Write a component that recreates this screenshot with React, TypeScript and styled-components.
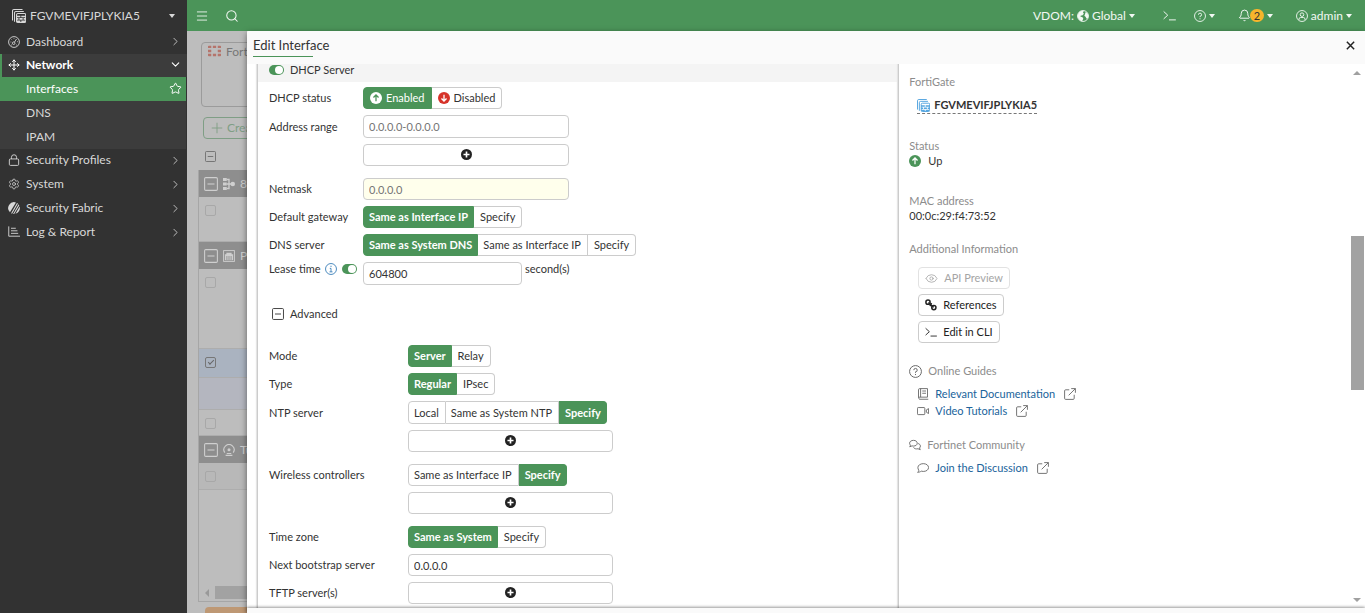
import React from "react";
import styled, { createGlobalStyle, css } from "styled-components";
import { Bell, ChevronDown, ChevronRight, Eye, Menu, Move, Search, Settings, Star } from "lucide-react";

const green = "#4b9459";
const line = "#cccccc";

const GlobalStyle = createGlobalStyle`
  html, body, #root { height: 100%; margin: 0; }
  *, *::before, *::after { box-sizing: border-box; }
  body, button, input { font: 400 12px/16px Lato, sans-serif; color: #333; }
  button { margin: 0; padding: 0; border: 0; background: none; cursor: pointer; white-space: nowrap; }
  svg { flex: none; display: block; }
`;

/* ---------- icons ---------- */

const Glyph = styled.svg.attrs({ viewBox: "0 0 16 16", "aria-hidden": true })<{ $size?: number }>`
  width: ${(p) => p.$size ?? 12}px;
  height: ${(p) => p.$size ?? 12}px;
  fill: none;
  stroke: currentColor;
  stroke-width: 1.2;
`;

const StackIcon = ({ size = 14 }: { size?: number }) => (
  <Glyph $size={size}>
    <path d="M12 .6H2.200A1.600 1.600 0 0 0 .6 2.200V13M13.500 2.900H4.500a1.600 1.600 0 0 0-1.600 1.600V14.500" />
    <path d="M5.200 14V6.600A1.400 1.400 0 0 1 6.600 5.200h7.800a1.200 1.200 0 0 1 1.200 1.200V14a1.400 1.400 0 0 1-1.400 1.400H6.600A1.400 1.400 0 0 1 5.200 14Z" />
    <path fill="currentColor" stroke="none" d="M5 7.600h4.600v1.800H5ZM10.600 7.600H16v1.800h-5.400ZM5 10.400h2.400v1.800H5ZM8.400 10.400h3.800v1.800H8.400ZM13.200 10.400H16v1.800h-2.800ZM5 13.200h4.600V15H5ZM10.600 13.200H15V15h-4.400Z" />
  </Glyph>
);
const GaugeIcon = () => (
  <Glyph>
    <circle cx="8" cy="8" r="7.2" />
    <circle cx="7.6" cy="9.6" r="1.7" />
    <path d="M8.6 8.2 11.4 4M3.4 8h1M4.8 4.8l.6.6M8 3.2v.8M12 7.6h1M4.2 12h1M11 12h1" />
  </Glyph>
);
const LockIcon = () => (
  <Glyph>
    <rect x="1.800" y="6.600" width="12.400" height="8.600" rx="1.400" />
    <path d="M4.600 6.600V4.400a3.400 3.400 0 0 1 6.800 0v2.200" />
  </Glyph>
);
const FabricIcon = () => (
  <Glyph>
    <path fill="currentColor" stroke="none" d="M10.6.5A8 8 0 0 0 2.6 13.8ZM12 1.2 4.2 15l1.2.5L13.3 2.1ZM14.2 3 6.8 15.9l1.4.1L15 4.5ZM15.6 6 10 15.7A8 8 0 0 0 15.6 6Z" />
  </Glyph>
);
const ReportIcon = () => (
  <Glyph>
    <path d="M1 .5V13.6h15M4 3h6.4M4 6.4h8.6M4 9.8h9.6" />
  </Glyph>
);
const GlobeIcon = () => (
  <Glyph>
    <circle cx="8" cy="8" r="7.3" />
    <path fill="currentColor" stroke="none" d="M2 4.2C3.6 1.8 6.4.8 9 1.2L8 3.4 9.2 5 7 7.2H5.2L4.4 8.800l3 .8 1 2-1.600 3.400C3.400 14.400.6 11 1 7ZM11.200 3l2.400.8 1.600 3.400-.6 3.400-1.800 1-1.400-2.600-1.600-1.400 1-2.200Z" />
  </Glyph>
);
const TerminalIcon = ({ size = 13 }: { size?: number }) => (
  <Glyph $size={size}>
    <path d="m.8 3 5 4.6-5 4.6M7.4 13.4h8.4" />
  </Glyph>
);
const HelpIcon = ({ size = 12 }: { size?: number }) => (
  <Glyph $size={size}>
    <circle cx="8" cy="8" r="7.3" />
    <path d="M5.900 6.300A2.100 2.100 0 1 1 8 8.400v1.200M8 11v1.400" />
  </Glyph>
);
const UserIcon = () => (
  <Glyph>
    <circle cx="8" cy="8" r="7.3" />
    <circle cx="8" cy="6.2" r="2.4" />
    <path d="M4 13.2V12a2.2 2.2 0 0 1 2.2-2h3.6a2.2 2.2 0 0 1 2.2 2v1.2" />
  </Glyph>
);
const ArrowDisc = ({ disc, arrow, down }: { disc: string; arrow: string; down?: boolean }) => (
  <Glyph>
    <circle cx="8" cy="8" r="8" fill={disc} stroke="none" />
    <path stroke={arrow} strokeWidth="1.7" d={down ? "M8 3.8v8M4.6 8.6 8 12l3.4-3.4" : "M8 12.2v-8M4.6 7.4 8 4l3.4 3.4"} />
  </Glyph>
);
const PlusDisc = () => (
  <Glyph $size={11}>
    <circle cx="8" cy="8" r="8" fill="#222" stroke="none" />
    <path stroke="#fff" strokeWidth="2.4" d="M8 3.6v8.8M3.6 8h8.8" />
  </Glyph>
);
const InfoIcon = () => (
  <Glyph>
    <circle cx="8" cy="8" r="7.3" />
    <path d="M8 3.600v1.800M6.400 7.200H8v4.600M6 11.800h4" />
  </Glyph>
);
const MinusBox = ({ size = 12 }: { size?: number }) => (
  <Glyph $size={size}>
    <rect x=".7" y=".7" width="14.6" height="14.6" rx="1.4" />
    <path d="M4 8h8" />
  </Glyph>
);
const ChainIcon = () => (
  <Glyph>
    <g strokeWidth="2">
      <circle cx="4" cy="4.200" r="2.800" />
      <circle cx="11.800" cy="11.400" r="2.800" />
      <path d="m4.600 4.600 6.800 6.600M8.800 5.600 6.600 9.400" />
    </g>
  </Glyph>
);
const BookIcon = () => (
  <Glyph>
    <path d="M2 13.2V2.4A1.6 1.6 0 0 1 3.6.8H14v11.4H3.4A1.5 1.5 0 0 0 3.4 15H15M4.8.8v11.4M7 4h5M7 7h5" />
  </Glyph>
);
const VideoIcon = () => (
  <Glyph>
    <rect x=".6" y="3.4" width="9.8" height="9.4" rx="1" />
    <path d="m12.4 6.6 3-1.8v6.6l-3-1.8Z" />
  </Glyph>
);
const ChatsIcon = () => (
  <Glyph>
    <path d="M6 1.8c3 0 5 1.6 5 3.8S9 9.4 6 9.4c-.8 0-1.4 0-2-.2L1 10.4l1-2.2C1.200 7.400.8 6.600.8 5.600.8 3.400 3 1.800 6 1.800ZM12.200 6c1.800.600 3 1.800 3 3.400 0 1-.400 1.800-1.200 2.600l1 2.200-3-1.200c-2.400.600-5 0-6-1.800" />
  </Glyph>
);
const SpeechIcon = () => (
  <Glyph>
    <path d="M8.4 2.2c4 0 7 2.200 7 5.200s-3 5.200-7 5.200c-1 0-2-.2-2.800-.4-1 .8-2.400 1.400-4.800 1.600 1-.8 1.600-1.800 1.600-2.800-.8-1-1.200-2.200-1.200-3.600 0-3 3.200-5.200 7.200-5.200Z" />
  </Glyph>
);
const ExternalIcon = () => (
  <Glyph>
    <path d="M7 2.400H2.200A1.400 1.400 0 0 0 .8 3.800v10a1.400 1.400 0 0 0 1.400 1.400h10a1.400 1.400 0 0 0 1.400-1.400V9M9.600.8h5.600v5.600M15.200.8 6.200 9.800" />
  </Glyph>
);
const CloseIcon = () => (
  <Glyph $size={9}>
    <path d="m1.500 1.500 13 13M14.500 1.500l-13 13" strokeWidth="2.600" />
  </Glyph>
);
const ChassisIcon = () => (
  <Glyph $size={13}>
    <path fill="#b5746b" stroke="none" d="M1 2h3v3H0V3a1 1 0 0 1 1-1ZM6 2h4v3H6ZM12 2h3a1 1 0 0 1 1 1v2h-4ZM0 7h4v3H0ZM12 7h4v3h-4ZM0 12h4v3H1a1 1 0 0 1-1-1ZM6 12h4v3H6ZM12 12h4v2a1 1 0 0 1-1 1h-3Z" />
  </Glyph>
);
const AggregateIcon = () => (
  <Glyph>
    <path fill="currentColor" stroke="none" d="M0 0h5v4H0ZM0 6h5v4H0ZM0 12h5v4H0Z" />
    <circle cx="13" cy="8" r="3" fill="currentColor" stroke="none" />
    <path d="M5 2h3v12H5M5 8h6" strokeWidth="1.800" />
  </Glyph>
);
const PortIcon = () => (
  <Glyph>
    <rect x=".8" y=".8" width="14.400" height="14.400" />
    <path fill="currentColor" stroke="none" d="M2.500 13.500v-8h2v-2h7v2h2v8Z" />
    <path stroke="#8e8e8e" d="M5.200 8v5.500M8 8v5.500M10.800 8v5.500" />
  </Glyph>
);
const TunnelIcon = () => (
  <Glyph>
    <path strokeWidth="1.500" d="M2.400 11.500A6.800 6.800 0 1 1 13.600 11.500M3.500 15.200h9M5 12.600h6" />
    <circle cx="8" cy="7.800" r="2" fill="currentColor" stroke="none" />
  </Glyph>
);

const Caret = styled.i`
  border: 3px solid transparent;
  border-top: 4px solid currentColor;
  border-bottom: 0;
`;

/* ---------- shell ---------- */

const Shell = styled.div`
  display: grid;
  grid-template-columns: 187px minmax(0, 1fr);
  height: 100%;
  overflow: hidden;
  background: #fff;
`;

const Sidebar = styled.nav`
  background: #323232;
  color: #d8d8d8;
`;

const DeviceButton = styled.button`
  display: flex;
  align-items: center;
  gap: 4px;
  width: 100%;
  height: 31px;
  padding: 0 12px;
  color: #d8d8d8;
  span { flex: 1; text-align: left; }
`;

const NavLink = styled.a<{ $open?: boolean; $roomy?: boolean }>`
  display: flex;
  align-items: center;
  gap: 6px;
  height: ${(p) => (p.$roomy ? 24 : 23)}px;
  padding: 0 5px 2px ${(p) => (p.$open ? 6 : 8)}px;
  color: inherit;
  text-decoration: none;
  > span { flex: 1; }
  ${(p) => p.$open && css`
    border-left: 2px solid ${green};
    background: #3c3c3c;
    color: #fff;
    font-weight: 700;
  `}
`;

const SubLink = styled.a<{ $active?: boolean }>`
  display: flex;
  align-items: center;
  justify-content: space-between;
  height: 24px;
  margin-right: 1px;
  padding: 0 4px 1px 26px;
  background: ${(p) => (p.$active ? green : "#3c3c3c")};
  color: ${(p) => (p.$active ? "#fff" : "inherit")};
  text-decoration: none;
`;

const Main = styled.div`
  display: grid;
  grid-template: 31px minmax(0, 1fr) / 60px minmax(0, 1fr);
  min-width: 0;
  min-height: 0;
`;

const TopBar = styled.header`
  display: flex;
  align-items: center;
  grid-column: 1 / -1;
  gap: 16px;
  padding: 0 13px 0 8px;
  background: ${green};
  color: #fff;
`;

const TopButton = styled.button`
  display: flex;
  align-items: center;
  gap: 3px;
  color: #f2f8f3;
`;

const TopMenus = styled.div`
  display: flex;
  align-items: center;
  gap: 23px;
  margin-left: auto;
`;

const Pair = styled.div`
  display: flex;
  gap: 18px;
  padding-left: 5px;
`;

const Badge = styled.span`
  width: 14px;
  height: 13px;
  margin-left: -4px;
  border-radius: 7px;
  background: #f7b52c;
  color: #333;
  font-size: 11px;
  line-height: 13px;
`;

/* ---------- dimmed page beside the drawer ---------- */

const Backdrop = styled.main`
  overflow: hidden;
  background: #bdbdbd;
  color: #777;
`;

const BackPage = styled.div`
  display: flex;
  flex-direction: column;
  width: 400px;
  height: 100%;
  padding: 11px 12px 0 11px;
`;

const DimCard = styled.section`
  display: flex;
  gap: 5px;
  flex: none;
  height: 65px;
  margin-left: 3px;
  padding: 1px 6px;
  border: 1px solid #9b9b9b;
  border-radius: 4px;
`;

const CreateButton = styled.button`
  display: flex;
  align-items: center;
  align-self: flex-start;
  flex: none;
  gap: 4px;
  height: 22px;
  margin: 10px 0 0 5px;
  padding: 0 7px;
  border: 1px solid #7f9e85;
  border-radius: 4px;
  color: #7f9e85;
`;

const HeadCell = styled.div`
  display: flex;
  align-items: center;
  flex: none;
  height: 31px;
  padding: 4px 0 0 7px;
  color: #666;
`;

const DimTable = styled.div`
  display: flex;
  flex-direction: column;
  flex: 1;
  min-height: 0;
  margin-bottom: 5px;
  border: 1px solid #a6a6a6;
  border-top: 0;
`;

const GroupRow = styled.div`
  display: flex;
  align-items: center;
  gap: 5px;
  flex: none;
  height: 27px;
  padding-left: 5px;
  background: #8e8e8e;
  color: #cfcfcf;
  white-space: nowrap;
`;

const DimRow = styled.div<{ $h: number; $bg?: string }>`
  flex: none;
  height: ${(p) => p.$h}px;
  padding: 8px 6px;
  border-bottom: 1px solid #adadad;
  background: ${(p) => p.$bg ?? "transparent"};
`;

const DimCheck = styled.input.attrs({ type: "checkbox", "aria-label": "Select row" })`
  appearance: none;
  display: block;
  width: 11px;
  height: 11px;
  margin: 0;
  border: 1px solid #a8a8a8;
  border-radius: 2px;
  &:checked { border-color: #777; }
  &:checked::before {
    content: "";
    display: block;
    width: 6px;
    height: 3px;
    margin: 2px 0 0 2px;
    border: solid #666;
    border-width: 0 0 1px 1px;
    transform: rotate(-45deg);
  }
`;

const DimScroll = styled.div`
  display: flex;
  align-items: center;
  gap: 6px;
  height: 13px;
  margin: auto 0 2px;
  padding-left: 6px;
  &::before {
    content: "";
    border: 4px solid transparent;
    border-right-color: #999;
    border-left: 0;
  }
  &::after { content: ""; width: 60%; height: 13px; background: #a2a2a2; }
`;

const OrangeButton = styled.div`
  flex: none;
  width: 80px;
  height: 6px;
  margin-left: 7px;
  border-radius: 4px 4px 0 0;
  background: #be9874;
`;

/* ---------- drawer ---------- */

const Drawer = styled.section`
  position: relative;
  display: flex;
  flex-direction: column;
  min-width: 0;
  min-height: 0;
  background: #fff;
  border-radius: 3px 0 0 0;
  box-shadow: 0 2px 6px rgba(0, 0, 0, 0.5);
`;

const DrawerHead = styled.div`
  display: flex;
  align-items: flex-start;
  justify-content: space-between;
  flex: none;
  height: 33px;
  padding: 6px 10px 0 6px;
  border-radius: 3px 0 0 0;
  background: #fafafa;
  h1 { margin: 0; font-size: 13px; line-height: 16px; font-weight: 400; }
  h1::after { content: ""; display: block; width: 60px; height: 1px; margin-top: 3px; background: ${green}; }
  button { padding: 4px 0; color: #222; }
`;

const DrawerBody = styled.div`
  display: grid;
  grid-template-columns: minmax(0, 17fr) minmax(0, 12fr) 14px;
  flex: 1;
  min-height: 0;
  overflow: hidden;
  padding-left: 10px;
  font-size: 11px;
`;

const DrawerFoot = styled.div`
  flex: none;
  height: 5px;
  background: #fafafa;
  box-shadow: 0 -1px 3px rgba(0, 0, 0, 0.4);
`;

const Form = styled.form`
  display: flex;
  flex-direction: column;
  gap: 6px;
  min-width: 0;
  border-left: 1px solid ${line};
  box-shadow: -1px 0 1px #e4e4e4;
`;

const SectionBar = styled.label`
  display: flex;
  align-items: center;
  gap: 6px;
  height: 18px;
  margin-bottom: -1px;
  padding: 0 11px 6px;
  background: #f4f4f4;
  line-height: 12px;
`;

const Label = styled.label`
  display: flex;
  align-items: center;
  height: 22px;
  white-space: nowrap;
`;

const LeaseLabel = styled(Label)`
  justify-content: space-between;
  height: 14px;
  padding-right: 5px;
  svg { color: #3a7fb8; }
`;

const Stack = styled.div`
  display: flex;
  flex-direction: column;
  align-items: stretch;
  gap: 6px;
`;

const LeaseField = styled.div`
  display: flex;
  gap: 3px;
  line-height: 14px;
  input { width: 159px; flex: none; }
`;

const Segments = styled.div`
  display: flex;
  justify-self: start;
  width: max-content;
`;

const Segment = styled.button<{ $on?: boolean }>`
  display: flex;
  align-items: center;
  gap: 4px;
  height: 22px;
  padding: 0 ${(p) => (p.$on ? 5 : 6)}px 0 5px;
  border: 1px solid ${(p) => (p.$on ? green : line)};
  background: ${(p) => (p.$on ? green : "#fff")};
  color: ${(p) => (p.$on ? "#fff" : "#333")};
  font-size: 11px;
  font-weight: ${(p) => (p.$on ? 700 : 400)};
  & + & { border-left-width: ${(p) => (p.$on ? 1 : 0)}px; }
  &:first-child { border-radius: 4px 0 0 4px; }
  &:last-child { border-radius: 0 4px 4px 0; padding-left: 6px; }
`;

const StatusSegment = styled(Segment)`
  padding: 0 6px;
  font-weight: 400;
`;

const Row = styled.div<{ $wide?: boolean; $gap?: boolean; $tall?: boolean }>`
  display: grid;
  grid-template-columns: ${(p) => (p.$wide ? "138px 205px" : "93px 206px")};
  justify-content: start;
  gap: 0 1px;
  padding-left: 11px;
  margin-bottom: ${(p) => (p.$gap ? 6 : 0)}px;
  ${(p) => p.$tall && css`
    ${Label}, ${Segment} { height: 23px; }
  `}
`;

const Field = styled.input<{ $tall?: boolean; $required?: boolean }>`
  width: 100%;
  height: ${(p) => (p.$tall ? 23 : 22)}px;
  padding: 0 5px;
  border: 1px solid ${line};
  border-radius: 4px;
  background: ${(p) => (p.$required ? "#ffffec" : "#fff")};
  font-size: 11px;
  outline: none;
  &::placeholder { color: #757575; opacity: 1; }
`;

const AddButton = styled.button`
  display: flex;
  align-items: center;
  justify-content: center;
  width: 100%;
  height: 22px;
  padding-bottom: 1px;
  border: 1px solid ${line};
  border-radius: 4px;
`;

const Toggle = styled.input.attrs({ type: "checkbox", role: "switch" })`
  appearance: none;
  display: flex;
  justify-content: flex-end;
  flex: none;
  width: 15px;
  height: 10px;
  margin: 0;
  padding: 1px;
  border-radius: 5px;
  background: ${green};
  &::before { content: ""; width: 8px; height: 8px; border-radius: 4px; background: #fff; }
`;

const AdvancedButton = styled.button`
  display: flex;
  align-items: center;
  align-self: flex-start;
  gap: 6px;
  margin: 15px 0 17px 14px;
  font-size: 11px;
`;

/* ---------- information column ---------- */

const Info = styled.aside`
  display: flex;
  flex-direction: column;
  align-items: flex-start;
  min-width: 0;
  padding: 10px 0 0 10px;
  border-left: 1px solid ${line};
  box-shadow: -1px 0 1px #e4e4e4;
`;

const InfoBlock = styled.section<{ $after: number }>`
  display: flex;
  flex-direction: column;
  align-items: flex-start;
  margin-bottom: ${(p) => p.$after}px;
`;

const InfoTitle = styled.h2`
  display: flex;
  align-items: center;
  gap: 6px;
  margin: 0;
  color: #8c8c8c;
  font-size: 11px;
  line-height: 16px;
  font-weight: 400;
  svg { color: #666; }
`;

const InfoValue = styled.div`
  display: flex;
  align-items: center;
  gap: 7px;
  line-height: 14px;
`;

const DeviceLink = styled.a`
  display: flex;
  align-items: center;
  gap: 4px;
  margin: 7px 0 0 8px;
  border-bottom: 1px dashed #777;
  color: #333;
  font-weight: 700;
  line-height: 16px;
  text-decoration: none;
  svg { color: #55a6e0; }
`;

const Actions = styled.div`
  display: flex;
  flex-direction: column;
  align-items: flex-start;
  gap: 5px;
  padding: 10px 0 0 9px;
`;

const ActionButton = styled.button`
  display: flex;
  align-items: center;
  gap: 6px;
  height: 22px;
  padding: 0 6px;
  border: 1px solid ${line};
  border-radius: 4px;
  color: #222;
  font-size: 11px;
  &:disabled { border-color: #e2e2e2; color: #a5a5a5; }
`;

const GuideLink = styled.a`
  display: flex;
  align-items: center;
  gap: 6px;
  height: 17px;
  padding-left: 8px;
  color: #20639b;
  text-decoration: none;
  svg { color: #666; }
  svg:last-child { margin-left: 3px; }
`;

const Guides = styled.div`
  padding-top: 6px;
`;

const Scrollbar = styled.div`
  display: flex;
  flex-direction: column;
  align-items: center;
  padding: 7px 1px 6px 0;
  &::before, &::after { content: ""; border: 4px solid transparent; }
  &::before { border-top: 0; border-bottom-color: #a0a0a0; }
  &::after { border-bottom: 0; border-top-color: #a0a0a0; }
`;
const Track = styled.div<{ $grow: number; $thumb?: boolean }>`
  flex: ${(p) => p.$grow} 0 0;
  width: 100%;
  background: ${(p) => (p.$thumb ? "#a2a2a2" : "transparent")};
`;

/* ---------- pieces ---------- */

const Choice = ({ options, value, label }: { options: string[]; value: string; label: string }) => (
  <Segments role="group" aria-label={label}>
    {options.map((o) => (
      <Segment type="button" key={o} $on={o === value} aria-pressed={o === value}>
        {o}
      </Segment>
    ))}
  </Segments>
);

const Add = ({ label }: { label: string }) => (
  <AddButton type="button" aria-label={label}>
    <PlusDisc />
  </AddButton>
);

const sections = [
  { name: "Security Profiles", icon: <LockIcon /> },
  { name: "System", icon: <Settings size={12} strokeWidth={1.5} /> },
  { name: "Security Fabric", icon: <FabricIcon /> },
  { name: "Log & Report", icon: <ReportIcon /> },
];

export default function App() {
  return (
    <>
      <GlobalStyle />
      <Shell>
        <Sidebar>
          <DeviceButton>
            <StackIcon />
            <span>FGVMEVIFJPLYKIA5</span>
            <Caret />
          </DeviceButton>
          <NavLink href="#dashboard">
            <GaugeIcon />
            <span>Dashboard</span>
            <ChevronRight size={13} strokeWidth={1.5} />
          </NavLink>
          <NavLink href="#network" $open>
            <Move size={12} strokeWidth={2} />
            <span>Network</span>
            <ChevronDown size={13} strokeWidth={2} />
          </NavLink>
          <SubLink href="#interfaces" $active>
            Interfaces
            <Star size={13} strokeWidth={1.8} />
          </SubLink>
          <SubLink href="#dns">DNS</SubLink>
          <SubLink href="#ipam">IPAM</SubLink>
          {sections.map((s) => (
            <NavLink key={s.name} href="#" $roomy>
              {s.icon}
              <span>{s.name}</span>
              <ChevronRight size={13} strokeWidth={1.5} />
            </NavLink>
          ))}
        </Sidebar>

        <Main>
          <TopBar>
            <TopButton aria-label="Toggle menu"><Menu size={14} strokeWidth={1.5} /></TopButton>
            <TopButton aria-label="Search"><Search size={14} strokeWidth={1.8} /></TopButton>
            <TopMenus>
              <TopButton>
                VDOM: <GlobeIcon /> Global <Caret />
              </TopButton>
              <Pair>
                <TopButton aria-label="CLI console"><TerminalIcon /></TopButton>
                <TopButton aria-label="Help"><HelpIcon /><Caret /></TopButton>
              </Pair>
              <TopButton aria-label="Notifications">
                <Bell size={13} strokeWidth={1.8} />
                <Badge>2</Badge>
                <Caret />
              </TopButton>
              <TopButton>
                <UserIcon /> admin <Caret />
              </TopButton>
            </TopMenus>
          </TopBar>

          <Backdrop>
            <BackPage>
              <DimCard><ChassisIcon />FortiGate</DimCard>
              <CreateButton><Glyph><path d="M8 1v14M1 8h14" /></Glyph>Create</CreateButton>
              <HeadCell><MinusBox size={11} /></HeadCell>
              <DimTable>
                <GroupRow><MinusBox size={14} /><AggregateIcon />802.3ad</GroupRow>
                <DimRow $h={45}><DimCheck /></DimRow>
                <GroupRow><MinusBox size={14} /><PortIcon />Physical</GroupRow>
                <DimRow $h={80}><DimCheck /></DimRow>
                <DimRow $h={29} $bg="#aab3c0"><DimCheck defaultChecked /></DimRow>
                <DimRow $h={32} $bg="#b4b6bf" />
                <DimRow $h={26}><DimCheck /></DimRow>
                <GroupRow><MinusBox size={14} /><TunnelIcon />Tunnel</GroupRow>
                <DimRow $h={27} $bg="#b8b8b8"><DimCheck /></DimRow>
                <DimScroll />
              </DimTable>
              <OrangeButton />
            </BackPage>
          </Backdrop>

          <Drawer aria-label="Edit Interface">
            <DrawerHead>
              <h1>Edit Interface</h1>
              <button aria-label="Close"><CloseIcon /></button>
            </DrawerHead>
            <DrawerBody>
              <Form>
                <SectionBar>
                  <Toggle defaultChecked />
                  DHCP Server
                </SectionBar>
                <Row>
                  <Label as="span">DHCP status</Label>
                  <Segments role="group" aria-label="DHCP status">
                    <StatusSegment type="button" $on aria-pressed>
                      <ArrowDisc disc="#fff" arrow={green} />
                      Enabled
                    </StatusSegment>
                    <StatusSegment type="button" aria-pressed={false}>
                      <ArrowDisc disc="#d6332a" arrow="#fff" down />
                      Disabled
                    </StatusSegment>
                  </Segments>
                </Row>
                <Row $gap $tall>
                  <Label htmlFor="range">Address range</Label>
                  <Stack>
                    <Field id="range" $tall placeholder="0.0.0.0-0.0.0.0" />
                    <Add label="Add address range" />
                  </Stack>
                </Row>
                <Row>
                  <Label htmlFor="netmask">Netmask</Label>
                  <Field id="netmask" $required placeholder="0.0.0.0" />
                </Row>
                <Row>
                  <Label as="span">Default gateway</Label>
                  <Choice label="Default gateway" options={["Same as Interface IP", "Specify"]} value="Same as Interface IP" />
                </Row>
                <Row>
                  <Label as="span">DNS server</Label>
                  <Choice label="DNS server" options={["Same as System DNS", "Same as Interface IP", "Specify"]} value="Same as System DNS" />
                </Row>
                <Row>
                  <LeaseLabel htmlFor="lease">
                    Lease time <InfoIcon /> <Toggle defaultChecked aria-label="Limit lease time" />
                  </LeaseLabel>
                  <LeaseField>
                    <Field id="lease" $tall defaultValue="604800" />
                    <span>second(s)</span>
                  </LeaseField>
                </Row>
                <AdvancedButton type="button" aria-expanded>
                  <MinusBox />
                  Advanced
                </AdvancedButton>
                <Row $wide>
                  <Label as="span">Mode</Label>
                  <Choice label="Mode" options={["Server", "Relay"]} value="Server" />
                </Row>
                <Row $wide>
                  <Label as="span">Type</Label>
                  <Choice label="Type" options={["Regular", "IPsec"]} value="Regular" />
                </Row>
                <Row $wide $gap $tall>
                  <Label as="span">NTP server</Label>
                  <Stack>
                    <Choice label="NTP server" options={["Local", "Same as System NTP", "Specify"]} value="Specify" />
                    <Add label="Add NTP server" />
                  </Stack>
                </Row>
                <Row $wide $gap>
                  <Label as="span">Wireless controllers</Label>
                  <Stack>
                    <Choice label="Wireless controllers" options={["Same as Interface IP", "Specify"]} value="Specify" />
                    <Add label="Add wireless controller" />
                  </Stack>
                </Row>
                <Row $wide>
                  <Label as="span">Time zone</Label>
                  <Choice label="Time zone" options={["Same as System", "Specify"]} value="Same as System" />
                </Row>
                <Row $wide>
                  <Label htmlFor="bootstrap">Next bootstrap server</Label>
                  <Field id="bootstrap" defaultValue="0.0.0.0" />
                </Row>
                <Row $wide>
                  <Label as="span">TFTP server(s)</Label>
                  <Add label="Add TFTP server" />
                </Row>
              </Form>

              <Info>
                <InfoBlock $after={24}>
                  <InfoTitle>FortiGate</InfoTitle>
                  <DeviceLink href="#device"><StackIcon size={13} />FGVMEVIFJPLYKIA5</DeviceLink>
                </InfoBlock>
                <InfoBlock $after={25}>
                  <InfoTitle>Status</InfoTitle>
                  <InfoValue><ArrowDisc disc={green} arrow="#fff" />Up</InfoValue>
                </InfoBlock>
                <InfoBlock $after={18}>
                  <InfoTitle>MAC address</InfoTitle>
                  <InfoValue>00:0c:29:f4:73:52</InfoValue>
                </InfoBlock>
                <InfoBlock $after={20}>
                  <InfoTitle>Additional Information</InfoTitle>
                  <Actions>
                    <ActionButton disabled><Eye size={13} strokeWidth={1.5} />API Preview</ActionButton>
                    <ActionButton><ChainIcon />References</ActionButton>
                    <ActionButton><TerminalIcon size={12} />Edit in CLI</ActionButton>
                  </Actions>
                </InfoBlock>
                <InfoBlock $after={18}>
                  <InfoTitle><HelpIcon size={13} />Online Guides</InfoTitle>
                  <Guides>
                    <GuideLink href="#docs"><BookIcon />Relevant Documentation<ExternalIcon /></GuideLink>
                    <GuideLink href="#videos"><VideoIcon />Video Tutorials<ExternalIcon /></GuideLink>
                  </Guides>
                </InfoBlock>
                <InfoBlock $after={0}>
                  <InfoTitle><ChatsIcon />Fortinet Community</InfoTitle>
                  <Guides>
                    <GuideLink href="#community"><SpeechIcon />Join the Discussion<ExternalIcon /></GuideLink>
                  </Guides>
                </InfoBlock>
              </Info>

              <Scrollbar aria-hidden>
                <Track $grow={160} />
                <Track $grow={153} $thumb />
                <Track $grow={206} />
              </Scrollbar>
            </DrawerBody>
            <DrawerFoot />
          </Drawer>
        </Main>
      </Shell>
    </>
  );
}
